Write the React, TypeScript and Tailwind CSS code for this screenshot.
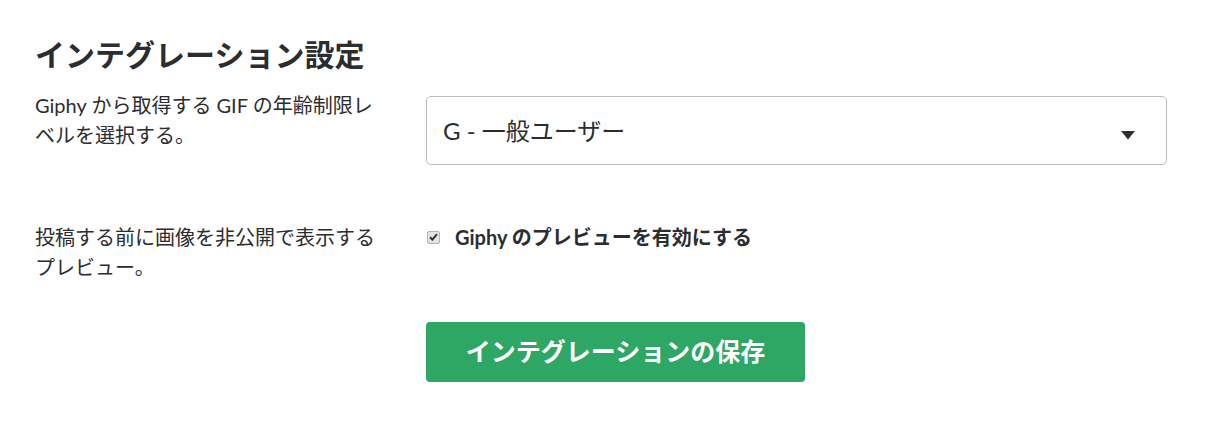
import React from "react";

export default function App() {
  return (
    <div
      className="min-h-[427px] w-[1219px] bg-white pl-[35px] pt-[36px] text-[#2c2d30]"
      style={{ fontFamily: 'Lato, "Noto Sans CJK JP", sans-serif' }}
    >
      <h1 className="text-[30px] font-bold leading-[36px]">
        インテグレーション設定
      </h1>

      <div className="mt-[18px] grid grid-cols-[391px_741px]">
        <p className="w-[355px] text-[20px] leading-[30px]">
          Giphy から取得する GIF の年齢制限レベルを選択する。
        </p>
        <div className="mt-[6px] flex h-[69px] items-center justify-between rounded-[5px] border border-[#bcbcbf] pl-[16px] pr-[31px]">
          <span className="text-[24px] leading-none">G - 一般ユーザー</span>
          <svg width="14" height="9" viewBox="0 0 14 9" className="mt-[9px]">
            <path d="M0 0 H14 L7 8.5 Z" fill="#2c2d30" />
          </svg>
        </div>
      </div>

      <div className="mt-[57px] grid grid-cols-[391px_741px]">
        <p className="w-[355px] text-[20px] leading-[30px]">
          投稿する前に画像を非公開で表示するプレビュー。
        </p>
        <label className="flex h-[30px] items-center">
          <span className="ml-[1px] flex h-[13px] w-[13px] items-center justify-center rounded-[2px] border border-[#b4b4b4] bg-[#e3e3e3]">
            <svg width="9" height="8" viewBox="0 0 9 8">
              <path d="M1 4.2 L3.4 6.6 L8 1.2" stroke="#333" strokeWidth="2" fill="none" />
            </svg>
          </span>
          <span className="ml-[15px] text-[20px] font-bold">
            Giphy のプレビューを有効にする
          </span>
        </label>
      </div>

      <div className="mt-[40px] grid grid-cols-[391px_741px]">
        <div />
        <button className="flex h-[60px] w-[379px] items-center justify-center rounded-[4px] bg-[#2ea664] text-[25px] font-bold text-white">
          インテグレーションの保存
        </button>
      </div>
    </div>
  );
}
